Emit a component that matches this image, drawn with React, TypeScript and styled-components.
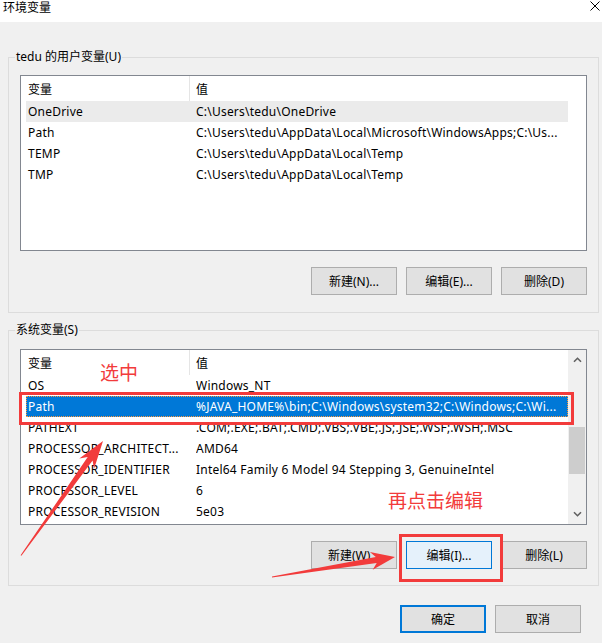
import React from "react";
import styled, { createGlobalStyle } from "styled-components";

const UI_FONT = `"Noto Sans", "Noto Sans CJK SC", sans-serif`;
const RED = "#f23b3b";

const GlobalStyle = createGlobalStyle`
  html, body { margin: 0; padding: 0; background: #f0f0f0; }
  body { font-family: ${UI_FONT}; font-size: 12px; color: #000; }
  * { box-sizing: border-box; }
`;

const Window = styled.div`
  position: relative;
  width: 602px;
  height: 643px;
  overflow: hidden;
  background: #f0f0f0;
  display: flex;
  flex-direction: column;
  font-family: ${UI_FONT};
  font-size: 12px;
  color: #000;
`;

const TitleBar = styled.div`
  height: 22px;
  flex: none;
  background: #fff;
  display: flex;
  justify-content: space-between;
  align-items: flex-start;
  padding: 0 2px 0 3px;
`;

const Title = styled.span`
  font-size: 12px;
  line-height: 15px;
`;

const CloseIcon = styled.svg`
  margin-top: 1px;
  display: block;
`;

const Body = styled.div`
  flex: 1;
  display: flex;
  flex-direction: column;
  padding: 27px 3px 0 8px;
`;

const Group = styled.fieldset<{ $gap?: number; $padTop?: number; $padBottom?: number }>`
  margin: ${(p) => p.$gap ?? 0}px 0 0 0;
  border: 1px solid #dcdcdc;
  padding: ${(p) => p.$padTop ?? 10}px 0 ${(p) => p.$padBottom ?? 17}px 0;
  min-width: 0;
`;

const Legend = styled.legend`
  margin-left: 6px;
  padding: 0 1px;
  font-size: 12px;
  line-height: 16px;
`;

const GroupContent = styled.div`
  padding: 0 11px;
  display: flex;
  flex-direction: column;
`;

const ListBox = styled.div`
  height: 176px;
  border: 1px solid #828790;
  background: #fff;
  display: flex;
`;

const ListMain = styled.div`
  flex: 1;
  min-width: 0;
  display: flex;
  flex-direction: column;
`;

const HeaderRow = styled.div`
  height: 25px;
  display: grid;
  grid-template-columns: 169px 1fr;
  align-items: stretch;
`;

const HeaderCell = styled.div<{ $sep?: boolean }>`
  display: flex;
  align-items: center;
  padding-left: ${(p) => (p.$sep ? 7 : 6)}px;
  border-right: ${(p) => (p.$sep ? "1px solid #e5e5e5" : "none")};
  white-space: nowrap;
`;

type RowState = "normal" | "hover" | "selected";

const Row = styled.div<{ $state: RowState }>`
  height: 21px;
  margin-left: 5px;
  display: grid;
  grid-template-columns: 170px 1fr;
  align-items: center;
  white-space: nowrap;
  overflow: hidden;
  letter-spacing: 0.22px;
  background: ${(p) =>
    p.$state === "selected" ? "#0078d7" : p.$state === "hover" ? "#ebebeb" : "transparent"};
  color: ${(p) => (p.$state === "selected" ? "#fff" : "#000")};
  outline: ${(p) => (p.$state === "selected" ? "1px dotted #ff9a3c" : "none")};
  outline-offset: -1px;
`;

const Cell = styled.span<{ $first?: boolean }>`
  padding-left: ${(p) => (p.$first ? 2 : 0)}px;
  overflow: hidden;
  white-space: nowrap;
`;

const Gutter = styled.div`
  width: 18px;
  flex: none;
`;

const ScrollBar = styled.div`
  width: 18px;
  flex: none;
  background: #f0f0f0;
  display: flex;
  flex-direction: column;
`;

const ScrollArrow = styled.div`
  height: 20px;
  flex: none;
  display: flex;
  align-items: center;
  justify-content: center;
`;

const ScrollTrack = styled.div`
  flex: 1;
  padding: 0 1px;
`;

const Thumb = styled.div<{ $top: number; $height: number }>`
  margin-top: ${(p) => p.$top}px;
  height: ${(p) => p.$height}px;
  background: #cdcdcd;
`;

const ButtonRow = styled.div`
  display: flex;
  justify-content: flex-end;
  gap: 9px;
  margin-top: 16px;
`;

type BtnVariant = "normal" | "focused" | "default";

const Button = styled.button<{ $variant?: BtnVariant }>`
  width: 86px;
  height: 28px;
  padding: 0;
  font-family: ${UI_FONT};
  font-size: 12px;
  color: #000;
  background: ${(p) => (p.$variant === "focused" ? "#e5f1fb" : "#e1e1e1")};
  border: ${(p) =>
    p.$variant === "default"
      ? "2px solid #0078d7"
      : p.$variant === "focused"
      ? "1px solid #0078d7"
      : "1px solid #adadad"};
  cursor: default;
`;

const Footer = styled.div`
  display: flex;
  justify-content: flex-end;
  gap: 9px;
  margin-top: 19px;
  padding-right: 18px;
`;

const Overlay = styled.div`
  position: absolute;
  inset: 0;
  pointer-events: none;
`;

const ArrowCanvas = styled.svg`
  position: absolute;
  left: 0;
  top: 0;
`;

const RedBox = styled.div<{ $x: number; $y: number; $w: number; $h: number }>`
  position: absolute;
  left: ${(p) => p.$x}px;
  top: ${(p) => p.$y}px;
  width: ${(p) => p.$w}px;
  height: ${(p) => p.$h}px;
  border: 3px solid ${RED};
`;

const RedNote = styled.span<{ $x: number; $y: number }>`
  position: absolute;
  left: ${(p) => p.$x}px;
  top: ${(p) => p.$y}px;
  color: ${RED};
  font-family: "Noto Sans CJK SC", sans-serif;
  font-size: 19px;
  line-height: 24px;
  white-space: nowrap;
`;

type Var = { name: string; value: string; state?: RowState };

const userVars: Var[] = [
  { name: "OneDrive", value: "C:\\Users\\tedu\\OneDrive", state: "hover" },
  { name: "Path", value: "C:\\Users\\tedu\\AppData\\Local\\Microsoft\\WindowsApps;C:\\Us..." },
  { name: "TEMP", value: "C:\\Users\\tedu\\AppData\\Local\\Temp" },
  { name: "TMP", value: "C:\\Users\\tedu\\AppData\\Local\\Temp" },
];

const sysVars: Var[] = [
  { name: "OS", value: "Windows_NT" },
  { name: "Path", value: "%JAVA_HOME%\\bin;C:\\Windows\\system32;C:\\Windows;C:\\Wi...", state: "selected" },
  { name: "PATHEXT", value: ".COM;.EXE;.BAT;.CMD;.VBS;.VBE;.JS;.JSE;.WSF;.WSH;.MSC" },
  { name: "PROCESSOR_ARCHITECT...", value: "AMD64" },
  { name: "PROCESSOR_IDENTIFIER", value: "Intel64 Family 6 Model 94 Stepping 3, GenuineIntel" },
  { name: "PROCESSOR_LEVEL", value: "6" },
  { name: "PROCESSOR_REVISION", value: "5e03" },
];

const Chevron = ({ down }: { down?: boolean }) => (
  <svg width="9" height="6" viewBox="0 0 9 6">
    <path
      d={down ? "M1 1.2 L4.5 4.7 L8 1.2" : "M1 4.8 L4.5 1.3 L8 4.8"}
      fill="none"
      stroke="#606060"
      strokeWidth="1.6"
    />
  </svg>
);

const VarList = ({ vars, scroll }: { vars: Var[]; scroll?: boolean }) => (
  <ListBox>
    <ListMain>
      <HeaderRow>
        <HeaderCell $sep>变量</HeaderCell>
        <HeaderCell>值</HeaderCell>
      </HeaderRow>
      {vars.map((v) => (
        <Row key={v.name} $state={v.state ?? "normal"}>
          <Cell $first>{v.name}</Cell>
          <Cell>{v.value}</Cell>
        </Row>
      ))}
    </ListMain>
    {scroll ? (
      <ScrollBar>
        <ScrollArrow>
          <Chevron />
        </ScrollArrow>
        <ScrollTrack>
          <Thumb $top={57} $height={47} />
        </ScrollTrack>
        <ScrollArrow>
          <Chevron down />
        </ScrollArrow>
      </ScrollBar>
    ) : (
      <Gutter />
    )}
  </ListBox>
);

export default function App() {
  return (
    <>
      <GlobalStyle />
      <Window>
        <TitleBar>
          <Title>环境变量</Title>
          <CloseIcon width="10" height="10" viewBox="0 0 10 10">
            <path d="M0.5 0.5 L9.5 9.5 M9.5 0.5 L0.5 9.5" stroke="#000" strokeWidth="1" />
          </CloseIcon>
        </TitleBar>
        <Body>
          <Group>
            <Legend>tedu 的用户变量(U)</Legend>
            <GroupContent>
              <VarList vars={userVars} />
              <ButtonRow>
                <Button>新建(N)...</Button>
                <Button>编辑(E)...</Button>
                <Button>删除(D)</Button>
              </ButtonRow>
            </GroupContent>
          </Group>
          <Group $gap={9} $padTop={11} $padBottom={16}>
            <Legend>系统变量(S)</Legend>
            <GroupContent>
              <VarList vars={sysVars} scroll />
              <ButtonRow>
                <Button>新建(W)...</Button>
                <Button $variant="focused">编辑(I)...</Button>
                <Button>删除(L)</Button>
              </ButtonRow>
            </GroupContent>
          </Group>
          <Footer>
            <Button $variant="default">确定</Button>
            <Button>取消</Button>
          </Footer>
        </Body>
        <Overlay>
          <RedBox $x={19} $y={392} $w={555} $h={33} />
          <RedBox $x={399} $y={534} $w={104} $h={48} />
          <RedNote $x={100} $y={360}>选中</RedNote>
          <RedNote $x={388} $y={488}>再点击编辑</RedNote>
          <ArrowCanvas width="602" height="643" viewBox="0 0 602 643">
            <polygon
              fill={RED}
              points="20.6,555.3 21.4,555.7 92.6,460.6 94,469 103,441 79.3,458.4 87.7,457.1"
            />
            <polygon
              fill={RED}
              points="272,576.6 272,577.4 376.7,563 372.7,569.7 395,557 369.9,552 375.8,557.1"
            />
          </ArrowCanvas>
        </Overlay>
      </Window>
    </>
  );
}
